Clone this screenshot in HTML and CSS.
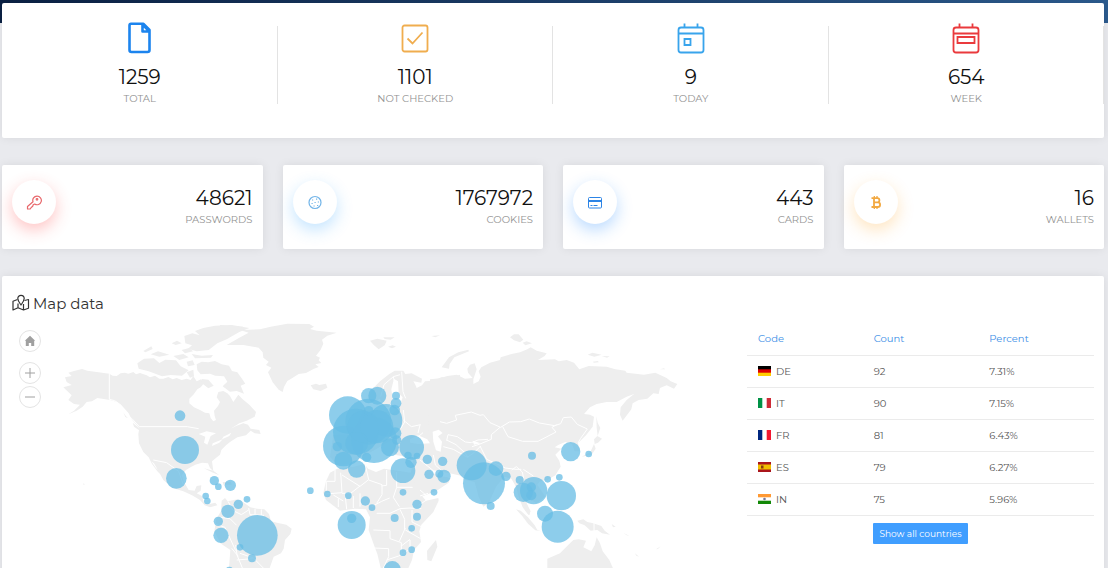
FILE: index.html
```html
<!DOCTYPE html>
<html lang="en">
<head>
    <meta charset="UTF-8">
    <meta name="viewport" content="width=device-width, initial-scale=1.0">
    <title>Dashboard</title>
    <link rel="stylesheet" href="styles.css">
</head>
<body>
    <main class="page">
        <section class="card summary">
            <div class="summary-item">
                <svg class="summary-icon blue" viewBox="0 0 32 32" fill="none" stroke="currentColor" stroke-width="2.6" stroke-linejoin="round">
                    <path d="M7 1.800h12.500l6 6.200V28a2 2 0 0 1-2 2h-16a2 2 0 0 1-2-2V3.500Q5.500 1.800 7 1.800z"/>
                    <path d="M18.500 2v7.500h7M19 3l6 6"/>
                </svg>
                <div class="number">1259</div>
                <div class="caption">TOTAL</div>
            </div>
            <div class="summary-item">
                <svg class="summary-icon orange" viewBox="0 0 32 32" fill="none" stroke="currentColor" stroke-width="1.800">
                    <rect x="3.500" y="3.500" width="25" height="26" rx="2"/>
                    <path d="M8.500 16.500l5 5 10-11"/>
                </svg>
                <div class="number">1101</div>
                <div class="caption">NOT CHECKED</div>
            </div>
            <div class="summary-item">
                <svg class="summary-icon sky" viewBox="0 0 32 32" fill="none" stroke="currentColor" stroke-width="1.800">
                    <rect x="3.500" y="5.500" width="25" height="25" rx="2.500"/>
                    <path d="M3.500 11.500h25M9.500 1.500v4M22.500 1.500v4M9.500 17h6v6h-6z"/>
                </svg>
                <div class="number">9</div>
                <div class="caption">TODAY</div>
            </div>
            <div class="summary-item">
                <svg class="summary-icon red" viewBox="0 0 32 32" fill="none" stroke="currentColor" stroke-width="1.800">
                    <rect x="3.500" y="5.500" width="25" height="25" rx="2.500"/>
                    <path d="M3.500 11.500h25M9.500 1.500v4M22.500 1.500v4M7.500 15h17v6h-17z"/>
                </svg>
                <div class="number">654</div>
                <div class="caption">WEEK</div>
            </div>
        </section>

        <section class="tiles">
            <div class="card tile">
                <div class="tile-icon key">
                    <svg viewBox="0 0 16 16" fill="none" stroke="currentColor" stroke-width="1.200" stroke-linejoin="round">
                        <path d="M7 7.800L1.500 12.500v2.500h2.700l1-1.500 1.500-1.200.5-1.500 1.500-.8a4.300 4.300 0 1 0-1.700-2.200z"/>
                        <circle cx="11" cy="5.300" r=".8"/>
                    </svg>
                </div>
                <div class="tile-text">
                    <div class="number">48621</div>
                    <div class="caption">PASSWORDS</div>
                </div>
            </div>
            <div class="card tile">
                <div class="tile-icon cookie">
                    <svg viewBox="0 0 16 16" fill="none" stroke="currentColor" stroke-width="1.200">
                        <circle cx="8" cy="8.500" r="6"/>
                        <path d="M5 6h1.200M9 5.200h1.200M7.500 8.500h1.200M10.800 8h1.200M4.500 9.500h1.200M6.500 12h1.200M10 11.500h1.200" stroke-width="1.200"/>
                    </svg>
                </div>
                <div class="tile-text">
                    <div class="number">1767972</div>
                    <div class="caption">COOKIES</div>
                </div>
            </div>
            <div class="card tile">
                <div class="tile-icon credit">
                    <svg viewBox="0 0 16 16" fill="none" stroke="currentColor">
                        <rect x="1.500" y="3.500" width="13" height="10.500" rx="1"/>
                        <path d="M1.500 7h13" stroke-width="2"/>
                        <path d="M3.500 11.500h2M6.500 11.500h4"/>
                    </svg>
                </div>
                <div class="tile-text">
                    <div class="number">443</div>
                    <div class="caption">CARDS</div>
                </div>
            </div>
            <div class="card tile">
                <div class="tile-icon wallet">
                    <svg viewBox="0 0 16 16" fill="none" stroke="currentColor" stroke-width="1.800">
                        <path d="M3.500 4.200h5.800a2.100 2.100 0 0 1 0 4.200H6M6 8.400h3.800a2.300 2.300 0 0 1 0 4.600H3.500M6 4v9"/>
                        <path d="M6.300 2v2M9 2v2M6.300 13v2M9 13v2" stroke-width="1.300"/>
                    </svg>
                </div>
                <div class="tile-text">
                    <div class="number">16</div>
                    <div class="caption">WALLETS</div>
                </div>
            </div>
        </section>

        <section class="card map-card">
            <h2 class="map-title">
                <svg viewBox="0 0 18 18" fill="none" stroke="currentColor" stroke-width="1.200" stroke-linejoin="round">
                    <path d="M5.500 5.500L1 7.300V16l5-2.200 5.500 2.200 5-1.800V5.500l-4 1M6 9.500v4.300M11.500 10v6"/>
                    <path d="M9 11C7 8 5.800 6.500 5.800 4.500a3.200 3.200 0 0 1 6.400 0C12.200 6.500 11 8 9 11z"/>
                </svg>
                Map data
            </h2>
            <div class="map-layout">
                <div class="map">
                    <div class="map-controls">
                        <button type="button" class="map-home" aria-label="Home">
                            <svg viewBox="0 0 12 12"><path d="M6 .8L.8 5.800h1V11h3V8h2.400v3h3V5.800h1z" fill="currentColor"/></svg>
                        </button>
                        <button type="button" aria-label="Zoom in">
                            <svg viewBox="0 0 12 12"><path d="M6 1v10M1 6h10" stroke="currentColor"/></svg>
                        </button>
                        <button type="button" aria-label="Zoom out">
                            <svg viewBox="0 0 12 12"><path d="M1 6h10" stroke="currentColor"/></svg>
                        </button>
                    </div>
                    <svg class="world" viewBox="36 960 2205 840">
                        <g class="land">
                            <!-- North America -->
                            <g transform="translate(0 810)">
                                <path d="M195 322L215 318 205 308 222 303 246 297 262 302 290 306 328 311 338 317 350 318 362 310 375 308 385 311 400 306 408 313 420 309 440 316 450 322 465 317 478 326 490 326 505 321 518 328 530 324 545 330 560 326 572 330 580 318 590 334 603 328 612 340 602 352 592 358 580 374 568 386 568 400 582 412 600 420 615 428 628 430 632 444 640 454 648 450 644 438 642 422 654 408 660 396 650 382 655 366 670 363 682 370 690 378 700 396 715 374 728 388 748 404 768 426 764 440 740 452 718 460 692 476 708 468 730 460 744 464 752 476 778 480 782 492 764 490 752 482 738 496 712 502 690 516 678 526 664 540 660 554 645 566 636 574 640 604 630 594 624 580 606 578 586 584 574 590 558 600 545 616 552 636 566 660 584 662 590 648 604 646 602 662 590 670 606 678 612 698 628 702 646 698 652 706 630 712 614 706 600 690 576 676 550 664 518 654 490 630 478 608 462 580 454 574 466 592 484 612 488 620 472 604 456 582 446 562 430 546 417 520 415 492 418 474 404 458 394 446 386 430 370 412 352 396 330 390 292 384 276 394 260 396 248 410 230 422 205 433 222 422 240 404 222 402 205 390 215 376 190 352 215 345 200 336z"/>
                                <path d="M370 427l8 12 6 6-8-4zM398 458l22 18-4 4-14-10z"/>
                                <path d="M250 639l4 4-3 3z"/>
                                <path d="M612 595l28 7 18 14-22-9zM668 636h24l4 8h-26z"/>
                            </g>
                            <g transform="translate(390 945)">
                                <path d="M195 48l25-9 35-7 50-2 53 9-30 12-38 22-28 12-26 20-36 4-26-8 12-10-20-6-3-22 24-8 22 6z"/>
                                <path d="M22 145l20-14 30-1 16 14 18-10 32 2 14 18 24 12-20 16-34-2-26 4-40-15-30-8zM40 108l24-14 4 8-22 10zM62 118l22-9 34 10-30 6zM125 85l16-8 14 8-18 5zM155 105l22-6 12 10-24 6zM130 123l30-6 16 10-28 8zM185 117l30 5 34-2-6 8-48 2zM170 140l18-4 6 14-20 4zM170 172l20-8 2 20-12 4z"/>
                                <path d="M200 148L215 140 235 142 255 138 275 148 297 152 306 168 322 172 338 194 346 206 332 212 342 236 320 228 300 230 278 214 292 200 282 184 256 182 240 176 212 178 202 166zM215 192l20 2 16 18-16 8-20-16z"/>
                            </g>
                            <!-- Greenland, Iceland, Svalbard -->
                            <g transform="translate(660 930)">
                                <path d="M0 45l70 5-20 12-30 22-20 4z"/>
                                <path d="M20 105l38-22 28-15-26-8 60-2 32-8 50-9 66 1 14 8-12 7 20 5 60 6-28 9-16 12 4 12-8 18-14 18 12 6-4 8 8 8-18 4 10 8-14 5-24 13-22 3-20 13-14 8-10 18-4 15-12-7-18-22-14-30 10-14-16-8 8-10-16-12-2-16-12-14-46-8z"/>
                                <path d="M272 226l16-5 10 4 20-4 4 12-20 10-22-5zM450 92l22-6 28 6-6 14-18 12-14-12zM490 82l34 0-12 7-18-2zM504 110l14-4 10 4-12 5zM634 78l26-2-14 6z"/>
                            </g>
                            <!-- South America -->
                            <g transform="translate(420 1260)">
                                <path d="M245 242l10-8 8 10 30-6 16 8 22 16 20 4 22 2 14 14 6 22 18 4 28 6 16 12-4 16-16 18-4 26-8 14-22 10-12 34h-122l4-54-30-20-18-36 6-38 14-22z"/>
                            </g>
                            <!-- Africa and Europe -->
                            <g transform="translate(660 930)">
                                <path d="M330 488L352 476 400 470 434 462 444 476 468 486 492 476 544 484 580 490 586 518 598 540 608 560 618 572 655 564 656 572 640 606 604 644 598 664 603 696 582 720 576 750 558 790H486L472 732 460 700 446 660 450 622 438 598 404 596 360 602 318 570 310 548 318 514z"/>
                                <path d="M648 690l4 20-18 44-12-4-1-28z"/>
                                <path d="M340 375L400 373 430 300 470 300 520 310 540 285 548 262 536 250 534 214 522 206 514 238 518 268 506 292 492 290 480 266 460 276 444 264 458 236 480 214 508 192 524 182 550 182 556 192 575 190 606 206 604 218 580 214 586 224 590 234 606 226 615 214 640 212 664 202 700 200 720 194V436L700 426 690 402 664 388 650 394 626 390 606 402 576 400 550 412 520 388 504 396 464 420 426 440 400 460 350 465 330 440z"/>
                                <path d="M520 396L574 398 612 390 640 404 650 432 720 432V492L680 488 650 480 628 462 618 466 640 490 666 498 690 504 686 518 650 542 600 562 590 530 572 490 580 450 556 440 524 434z"/>
                            </g>
                            <!-- Asia -->
                            <g transform="translate(1320 930)">
                                <path d="M-30 208L0 205 22 198 50 194 75 206 98 204 84 188 82 176 90 164 104 160 110 178 100 208 100 222 116 214 122 200 116 184 124 172 150 158 180 150 182 142 215 132 240 127 262 118 272 112 290 122 320 130 314 138 294 150 345 148 356 154 380 150 402 158 418 178 446 168 500 170 526 178 556 182 560 188 612 194 646 188 680 204 692 214 712 222 702 236 680 226 660 234 656 252 640 250 622 266 596 270 578 280 574 298 548 332 540 314 542 292 560 270 582 252 560 260 530 276 500 276 470 282 450 292 432 312 450 314 462 320 458 350 438 376 414 400 420 424 404 424 396 402 376 396 356 404 344 412 364 416 346 434 358 452 362 470 346 496 322 510 300 514 292 524 316 560 290 580 272 570 262 560 260 580 272 604 266 616 248 592 236 560 228 530 214 506 192 500 168 530 146 580 130 590 116 560 104 516 76 510 66 498 30 490 0 482-40 480z"/>
                                <path d="M5 172l22-30 28-15 30-8 2 5-44 18-14 20-2 14zM210 82l12-9 14 0 14 16-10 8-18-6zM248 98l12-4 16 6-20 6zM443 134l14-6 28 6-22 6zM485 138l24 1-8 4zM458 155l16-2 2 4-14 1zM660 178l12-3 3 3z"/>
                                <path d="M469 318l4 20 8 16-8 24-3-24zM462 388l10-10 14 8-12 12-10 4zM462 402l5 14-12 18-30 6 26-14z"/>
                                <!-- Indonesia and New Guinea -->
                                <path d="M228 598l14 4 22 20 20 24 8 14 12 4-18-3-22-20-18-24zM252 578l16 26 2 12-14-14zM412 632l18-4 12 8 18 4 24 8 10 14 16 12-24-4-14-10-20 2-18-16-16-6zM515 642l12 8-8 2zM550 668l18 10-8-2zM585 730l12 10-8-3zM648 718l14-9-8 8z"/>
                                <!-- Australia -->
                                <path d="M322 800V746L360 730 384 706 400 690 416 688 438 692 430 712 454 724 464 706 470 682 480 700 488 724 508 750 530 800z"/>
                            </g>
                        </g>
                        <g class="water">
                            <g transform="translate(1320 930)">
                                <path d="M-22 365l18-6 12 10-14 10 12 16-4 30-14-4-8-26zM-90 388l24-12 28 12 8 12-34 2-26-4z"/>
                                <path d="M98 392l24 8-20 4z"/>
                            </g>
                            <path d="M596 1302l24-8 28 6-16 8-10 26-10-6 4-18zM638 1330l30-12-10 10-22 10zM670 1310l24-12-6 10-22 10z"/>
                        </g>
                        <g class="borders">
                            <path d="M328 1120v78l16 4 20 14 14 28 18 12 22 24h144l34 6M460 1380l40 8 36 26 14 40"/>
                            <g transform="translate(420 1260)">
                                <path d="M264 244l16 28 24 12 22-14M326 264l4 20 42 2M345 266l0 18M364 268l0 18M240 292l30 4 20 20M225 312l30 10 32 70M287 375l4 30 16 39M275 385l20 24M300 400l40 14 30 30M290 420l48-4"/>
                            </g>
                            <g transform="translate(660 930)">
                                <path d="M482 260l10-36 28-24 20-6M520 200l8 40M545 185l4 60 8 20M550 330l24 20 28-6M550 300l4 36-12 20M600 345l-6 24M345 480v34h-26v28M362 488l4 60-50 4M366 495l54 34 26-20-10-44M446 510l40 14 0 30-16 26M500 480v46l-16 2M530 486v46l48 0M530 532l-10 30 18 28M420 528l-28 22-26 0M340 555l30 18M355 565v26M376 560l4 38M400 558l0 36M420 550v40M455 590l30-16 24-10M470 610h40l30-14 30-2 34 2M460 660l50 2 0 24M462 714l44 2v24l-16 34M510 686l34 12 0 40M540 598l14 30 0 30M556 654l-18 40M576 600l0 36 28 14M556 660l46 26M544 708l26-20M570 690v30M500 750l36-12 30-18M600 540l28 24-32 22M600 558l24-8M600 450l30 24 30 24 30 0M640 435l6 30 20 18"/>
                            </g>
                            <g transform="translate(1320 930)">
                                <path d="M-65 380l14-12M0 335l20 5 30-10-4-14 48-10 26 10 10-2 20 24 32 14 26-16 34-1 26-8 30 12 46 8 18-6 8-18 24-2 18 22 30 14-20 28-8 14M188 350l16 30 44 14 46 0 54-28-12-14 14-8M180 352l-26 22 0 14-34 14-24 8M20 392l4-18 28 6 24 16 18 2 20-8 30-2M20 390l28 14 26 24 10 14M10 410l30 8 42 24 20-14 20-20M120 408l20 40 56 26 32 4 16 0M215 480l14-10 18 16 4 20M250 478l30 20"/>
                                <path d="M462 632v38"/>
                            </g>
                        </g>
                        <g class="bubbles">
                            <g transform="translate(0 810)">
                                <circle cx="540" cy="437" r="16"/><circle cx="555" cy="540" r="42"/><circle cx="529" cy="625" r="31"/>
                                <circle cx="643" cy="632" r="14"/><circle cx="655" cy="650" r="10"/><circle cx="691" cy="646" r="17"/>
                                <circle cx="617" cy="678" r="10"/><circle cx="622" cy="693" r="10"/><circle cx="684" cy="724" r="20"/>
                                <circle cx="655" cy="754" r="14"/><circle cx="663" cy="796" r="23"/><circle cx="715" cy="703" r="14"/>
                                <circle cx="688" cy="901" r="11"/>
                            </g>
                            <g transform="translate(660 930)">
                                <circle cx="81" cy="568" r="10"/><circle cx="112" cy="676" r="61"/><circle cx="60" cy="712" r="10"/><circle cx="96" cy="745" r="12"/>
                                <circle cx="271" cy="542" r="10"/><circle cx="322" cy="552" r="10"/><circle cx="385" cy="557" r="10"/>
                                <circle cx="436" cy="573" r="14"/><circle cx="456" cy="593" r="10"/><circle cx="395" cy="645" r="42"/><circle cx="395" cy="625" r="14"/>
                                <circle cx="524" cy="624" r="12"/><circle cx="549" cy="547" r="10"/><circle cx="591" cy="583" r="14"/><circle cx="591" cy="620" r="12"/>
                                <circle cx="575" cy="655" r="10"/><circle cx="549" cy="728" r="10"/><circle cx="575" cy="719" r="10"/><circle cx="517" cy="778" r="25"/>
                                <circle cx="642" cy="547" r="10"/><circle cx="627" cy="493" r="14"/><circle cx="622" cy="448" r="14"/><circle cx="668" cy="454" r="14"/>
                                <circle cx="658" cy="491" r="12"/><circle cx="672" cy="499" r="20"/><circle cx="549" cy="482" r="37"/><circle cx="575" cy="412" r="37"/>
                                <circle cx="573" cy="457" r="17"/><circle cx="564" cy="436" r="11"/><circle cx="591" cy="438" r="10"/>
                                <circle cx="410" cy="477" r="26"/><circle cx="370" cy="452" r="27"/><circle cx="440" cy="442" r="14"/>
                                <circle cx="446" cy="257" r="23"/><circle cx="472" cy="257" r="27"/><circle cx="528" cy="257" r="12"/><circle cx="528" cy="280" r="16"/><circle cx="524" cy="300" r="16"/>
                                <circle cx="383" cy="315" r="56"/><circle cx="370" cy="408" r="61"/><circle cx="498" cy="331" r="49"/>
                                <circle cx="445" cy="335" r="69"/><circle cx="408" cy="365" r="69"/><circle cx="462" cy="390" r="69"/>
                                <circle cx="510" cy="412" r="27"/><circle cx="526" cy="370" r="18"/><circle cx="530" cy="390" r="14"/><circle cx="352" cy="410" r="14"/>
                                <circle cx="430" cy="350" r="48"/><circle cx="470" cy="350" r="50"/><circle cx="410" cy="400" r="34"/><circle cx="446" cy="302" r="14"/>
                            </g>
                            <g transform="translate(1320 930)">
                                <circle cx="95" cy="466" r="45"/><circle cx="132" cy="520" r="63"/><circle cx="168" cy="476" r="22"/><circle cx="198" cy="499" r="14"/>
                                <circle cx="152" cy="588" r="12"/><circle cx="276" cy="437" r="12"/><circle cx="239" cy="510" r="12"/><circle cx="250" cy="547" r="29"/>
                                <circle cx="281" cy="542" r="41"/><circle cx="274" cy="531" r="14"/><circle cx="274" cy="556" r="15"/><circle cx="323" cy="508" r="10"/>
                                <circle cx="358" cy="502" r="10"/><circle cx="364" cy="557" r="44"/><circle cx="315" cy="611" r="24"/><circle cx="353" cy="650" r="48"/>
                                <circle cx="392" cy="425" r="29"/><circle cx="446" cy="432" r="10"/>
                            </g>
                        </g>
                    </svg>
                </div>

                <div class="countries">
                    <table>
                        <thead>
                            <tr><th>Code</th><th>Count</th><th>Percent</th></tr>
                        </thead>
                        <tbody>
                            <tr>
                                <td><svg class="flag" viewBox="0 0 13 10"><path fill="#000" d="M0 0h13v4H0z"/><path fill="#d00" d="M0 3.300h13v4H0z"/><path fill="#ffce00" d="M0 6.700h13V10H0z"/></svg>DE</td>
                                <td>92</td><td>7.31%</td>
                            </tr>
                            <tr>
                                <td><svg class="flag" viewBox="0 0 13 10"><path fill="#fff" d="M0 0h13v10H0z"/><path fill="#009246" d="M0 0h4.300v10H0z"/><path fill="#ce2b37" d="M8.700 0H13v10H8.700z"/></svg>IT</td>
                                <td>90</td><td>7.15%</td>
                            </tr>
                            <tr>
                                <td><svg class="flag" viewBox="0 0 13 10"><path fill="#fff" d="M0 0h13v10H0z"/><path fill="#00267f" d="M0 0h4.300v10H0z"/><path fill="#f31830" d="M8.700 0H13v10H8.700z"/></svg>FR</td>
                                <td>81</td><td>6.43%</td>
                            </tr>
                            <tr>
                                <td><svg class="flag" viewBox="0 0 13 10"><path fill="#aa151b" d="M0 0h13v10H0z"/><path fill="#f1bf00" d="M0 2.500h13v5H0z"/><path fill="#8a3b12" d="M3 3.500h2.500v3H3z"/></svg>ES</td>
                                <td>79</td><td>6.27%</td>
                            </tr>
                            <tr>
                                <td><svg class="flag" viewBox="0 0 13 10"><path fill="#fff" d="M0 0h13v10H0z"/><path fill="#f93" d="M0 0h13v3.300H0z"/><path fill="#128807" d="M0 6.700h13V10H0z"/><circle cx="6.500" cy="5" r="1.300" fill="#779"/></svg>IN</td>
                                <td>75</td><td>5.96%</td>
                            </tr>
                        </tbody>
                    </table>
                    <button type="button" class="show-all">Show all countries</button>
                </div>
            </div>
        </section>
    </main>
</body>
</html>
```
FILE: styles.css
```css
* {
    margin: 0;
    padding: 0;
    box-sizing: border-box;
}

body {
    height: 100vh;
    overflow: hidden;
    background: linear-gradient(90deg, #0b2144, #2c5b8e) top / 100% 23px no-repeat #e9eaee;
    color: #212529;
    font-family: Montserrat, Lato, sans-serif;
    font-size: 10px;
}

.page {
    display: flex;
    flex-direction: column;
    gap: 27px;
    padding: 3px 4px 0 2px;
}

.card {
    background-color: #fff;
    border-radius: 2px;
    box-shadow: 0 0 10px rgba(0, 0, 0, 0.08);
}

.number {
    font-size: 20px;
    line-height: 24px;
    color: #111;
}

.caption {
    line-height: 20px;
    color: #929292;
}

/* Summary */
.summary {
    display: grid;
    grid-template-columns: repeat(4, 1fr);
    padding: 19px 0 29px;
}

.summary-item {
    display: flex;
    flex-direction: column;
    align-items: center;
    background: linear-gradient(#e3e3e3, #e3e3e3) right 4px / 1px 78px no-repeat;
}

.summary-icon {
    width: 32px;
    height: 32px;
    margin-bottom: 11px;
}

.blue {
    color: #1c84ee;
}

.orange {
    color: #f0ad4e;
}

.sky {
    color: #38a4ec;
}

.red {
    color: #ea3a3d;
}

/* Tiles */
.tiles {
    display: grid;
    grid-template-columns: repeat(4, 1fr);
    gap: 20px;
}

.tile {
    display: flex;
    justify-content: space-between;
    padding: 15px 10px 16px;
}

.tile-icon {
    display: flex;
    align-items: center;
    justify-content: center;
    width: 44px;
    height: 44px;
    border-radius: 50%;
}

.tile-icon svg {
    width: 16px;
    height: 16px;
}

.key {
    color: #e8676b;
    box-shadow: 0 6px 16px rgba(255, 60, 60, 0.3);
}

.cookie {
    color: #72b4e8;
    box-shadow: 0 6px 16px rgba(56, 164, 255, 0.3);
}

.credit {
    color: #2c84e6;
    box-shadow: 0 6px 16px rgba(28, 132, 255, 0.3);
}

.wallet {
    color: #f2a840;
    box-shadow: 0 6px 16px rgba(255, 170, 50, 0.3);
}

.tile-text {
    padding: 6px 0 3px;
    text-align: right;
}

/* Map */
.map-card {
    padding: 14px 10px;
}

.map-title {
    display: flex;
    align-items: center;
    gap: 3px;
    height: 26px;
    margin-bottom: 4px;
    color: #333;
    font-size: 15px;
    font-weight: 400;
}

.map-title svg {
    width: 18px;
    height: 18px;
}

.map-layout {
    display: grid;
    grid-template-columns: 1fr 347px;
}

.map {
    position: relative;
}

.world {
    display: block;
    width: 100%;
}

.land {
    fill: #eee;
}

.water {
    fill: #fff;
}

.borders {
    fill: none;
    stroke: #fff;
    stroke-width: 3;
    stroke-linejoin: round;
}

.bubbles {
    fill: #67bce4;
    fill-opacity: 0.75;
}

.map-controls {
    position: absolute;
    top: 10px;
    left: 7px;
    display: flex;
    flex-direction: column;
    gap: 2px;
}

.map-controls button {
    display: flex;
    align-items: center;
    justify-content: center;
    width: 22px;
    height: 22px;
    border: 1px solid #e4e4e4;
    border-radius: 50%;
    background-color: #fff;
    color: #a0a0a0;
}

.map-controls .map-home {
    margin-bottom: 8px;
}

.map-controls svg {
    width: 12px;
    height: 12px;
}

/* Countries */
.countries {
    padding-top: 3px;
    text-align: center;
}

table {
    width: 100%;
    table-layout: fixed;
    border-collapse: collapse;
    text-align: left;
    color: #555;
}

th,
td {
    height: 32px;
    padding: 0 11px;
    border-bottom: 1px solid #ebebeb;
}

th {
    color: #3a8ee6;
    font-weight: 400;
}

.flag {
    width: 13px;
    height: 10px;
    margin-right: 5px;
    vertical-align: -1px;
}

.show-all {
    margin-top: 7px;
    padding: 0 6px;
    border: none;
    border-radius: 1px;
    background-color: #409eff;
    color: #fff;
    font-family: inherit;
    font-size: 9px;
    line-height: 21px;
    cursor: pointer;
}
```
